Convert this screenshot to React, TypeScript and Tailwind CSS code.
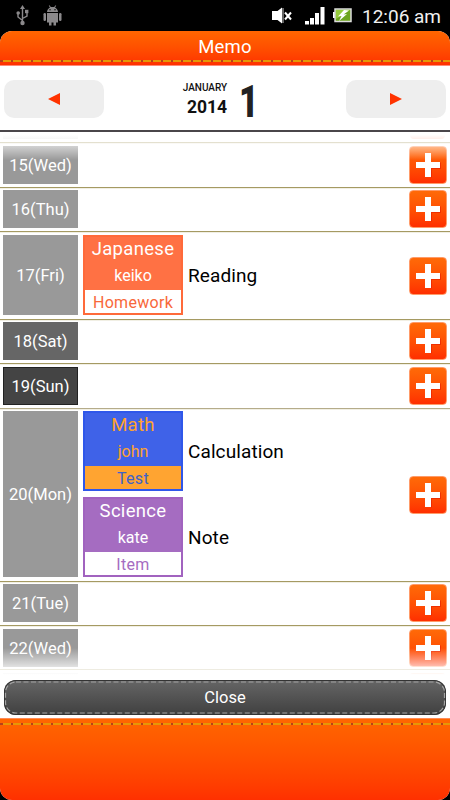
import clsx from 'clsx'

type Memo = {
  subject: string
  teacher: string
  kind: string
  note: string
  card: string
  label: string
}

type Day = {
  label: string
  row: string
  cell: string
  line: string
  memos?: Memo[]
}

const weekday = 'bg-[#999999]'

const days: Day[] = [
  { label: '15(Wed)', row: 'h-[45px] pt-[3px]', cell: weekday, line: 'border-[#a59a62]' },
  { label: '16(Thu)', row: 'h-[44px] pt-[2px]', cell: weekday, line: 'border-[#a59a62]' },
  {
    label: '17(Fri)',
    row: 'h-[88px] pt-[3px]',
    cell: weekday,
    line: 'border-[#a59a62]',
    memos: [
      {
        subject: 'Japanese',
        teacher: 'keiko',
        kind: 'Homework',
        note: 'Reading',
        card: 'bg-[#ff7144] border-[#ff6a3a] text-white',
        label: 'bg-white text-[#f8683a]'
      }
    ]
  },
  { label: '18(Sat)', row: 'h-[44px] pt-[2px]', cell: 'bg-[#666666]', line: 'border-[#a59a62]' },
  {
    label: '19(Sun)',
    row: 'h-[45px] pt-[3px]',
    cell: 'bg-[#444444] shadow-[inset_0_0_0_1px_#222]',
    line: 'border-[#a59a62]'
  },
  {
    label: '20(Mon)',
    row: 'h-[173px] pt-[2px]',
    cell: weekday,
    line: 'border-[#b5ac8a]',
    memos: [
      {
        subject: 'Math',
        teacher: 'john',
        kind: 'Test',
        note: 'Calculation',
        card: 'bg-[#3f62e8] border-[#2f57ea] text-[#ffa22e]',
        label: 'bg-[#ffa431] text-[#3f62c8]'
      },
      {
        subject: 'Science',
        teacher: 'kate',
        kind: 'Item',
        note: 'Note',
        card: 'bg-[#a56cc1] border-[#a163bf] text-white',
        label: 'bg-white text-[#a56cc1]'
      }
    ]
  },
  { label: '21(Tue)', row: 'h-[44px] pt-[2px]', cell: weekday, line: 'border-[#a59a62]' },
  { label: '22(Wed)', row: 'h-[44px] pt-[3px]', cell: weekday, line: 'border-[#a59a62]' }
]

const StatusBar = () => (
  <div className="flex h-[31px] items-center bg-black text-white">
    <svg className="ml-[16px]" width="13" height="21" viewBox="0 0 13 21" fill="none" stroke="#8b898b" strokeWidth="1.4">
      <path d="M6.5 3v14M6.5 15.5L2 12V8M6.5 13.5L11 11V6" />
      <path d="M6.5 0L9 4H4z" fill="#8b898b" stroke="none" />
      <circle cx="6.5" cy="18" r="2.2" fill="#8b898b" stroke="none" />
      <circle cx="2.2" cy="8" r="1.8" fill="#8b898b" stroke="none" />
      <path d="M9 4.8h3.4v3.4H9z" fill="#8b898b" stroke="none" />
    </svg>
    <svg className="ml-[14px]" width="19" height="21" viewBox="0 0 19 21" fill="#8b898b">
      <path d="M4 7C4 4.6 5.6 3 7 2.4L5.8.8l.7-.5L7.8 2h3.4L12.5.3l.7.5L12 2.4C13.4 3 15 4.6 15 7z" />
      <path d="M4 8h11v9.5H4z" />
      <path d="M6 17h2.5v3.5H6zM10.5 17H13v3.5h-2.5z" />
      <rect x="0.5" y="8" width="2.5" height="8" rx="1.2" />
      <rect x="16" y="8" width="2.5" height="8" rx="1.2" />
      <circle cx="7" cy="4.8" r=".7" fill="#000" />
      <circle cx="12" cy="4.8" r=".7" fill="#000" />
    </svg>

    <svg className="ml-[210px]" width="21" height="18" viewBox="0 0 21 18" fill="#fff">
      <path d="M0 4h5.5L10 0.5v16L5.5 13H0z" />
      <path d="M13 5.5l6 7M19 5.5l-6 7" stroke="#fff" strokeWidth="2" />
      <path d="M11 1v15" stroke="#fff" strokeWidth=".8" />
    </svg>
    <svg className="ml-[12px]" width="20" height="18" viewBox="0 0 20 18" fill="#fff">
      <path d="M0 14h4v3.5H0zM5 11h4v6.5H5zM10 6h4v11.5h-4zM15.5 0h4v17.5h-4z" />
    </svg>
    <svg className="ml-[8px]" width="19" height="15" viewBox="0 0 19 15">
      <path d="M0 4h3v6H0z" fill="#fff" />
      <rect x="2" y="1" width="16" height="12.5" fill="#6da51e" stroke="#ddd" strokeWidth="1.5" />
      <path d="M3 2h14L3 11z" fill="#96cc3c" />
      <path d="M11 2L5 8.5l3.5-.5L6 13l8-7-3.5.5L16 2.5z" fill="#fff" />
    </svg>
    <span className="ml-[10px] pt-[2px] text-[19px] leading-[29px] text-[#f0f0f0] whitespace-nowrap">12:06 am</span>
  </div>
)

const Stitch = () => (
  <svg className="block w-full" height="2" viewBox="0 0 450 2">
    <path d="M0 1h450" stroke="#b8401a" strokeWidth="2" />
    <path d="M3 1h450" stroke="#f5b400" strokeWidth="1.6" strokeDasharray="8 2" />
  </svg>
)

const PlusButton = () => (
  <button
    aria-label="Add memo"
    className="mr-[3px] h-[38px] w-[38px] shrink-0 rounded-[4px] border border-[#ff9b69] bg-linear-to-b from-[#ff6a08] to-[#ff2e00]"
  >
    <svg width="36" height="36" viewBox="0 0 36 36">
      <path d="M30.5 15.5v6h-9v9" fill="none" stroke="#e51c00" strokeWidth="1" opacity=".6" />
      <path d="M15 6h6v9h9v6h-9v9h-6v-9H6v-6h9z" fill="#fff" />
    </svg>
  </button>
)

const MemoCard = ({ subject, teacher, kind, note, card, label }: Memo) => (
  <div className="flex items-center">
    <div className={clsx('flex h-[80px] w-[100px] flex-col border-2 text-center', card)}>
      <div className="h-[26px] text-[18.5px] leading-[24px] tracking-[0.3px]">{subject}</div>
      <div className="h-[27px] text-[16px] leading-[25px]">{teacher}</div>
      <div className={clsx('h-[23px] text-[16px] leading-[25px] tracking-[0.3px]', label)}>{kind}</div>
    </div>
    <span className="ml-[5px] pt-[2px] text-[19px] leading-[24px] tracking-[0.1px] text-black">{note}</span>
  </div>
)

const DayRow = ({ label, row, cell, line, memos = [] }: Day) => (
  <div className={clsx('flex border-t pb-[3px] pl-[3px] shadow-[inset_0_1px_0_#f1efe4]', row, line)}>
    <div
      className={clsx(
        'flex w-[75px] shrink-0 items-center justify-center pt-[2px] text-[16.5px] text-white',
        memos.length === 0 && 'h-[38px]',
        memos.length === 1 && 'h-[80px]',
        memos.length === 2 && 'h-[166px]',
        cell
      )}
    >
      {label}
    </div>
    <div className="ml-[5px] flex flex-1 flex-col gap-[6px]">
      {memos.map(memo => (
        <MemoCard key={memo.subject} {...memo} />
      ))}
    </div>
    <div className="flex items-center">
      <PlusButton />
    </div>
  </div>
)

const App = () => {
  return (
    <div className="h-[800px] w-[450px] overflow-hidden bg-black font-['Roboto',sans-serif]">
      <StatusBar />

      <div className="bg-white [clip-path:inset(0_round_12px)]">
        <header className="flex h-[35px] flex-col border-b border-[#ff8a75] bg-linear-to-b from-[#ff6600] to-[#ff3000]">
          <h1 className="h-[29px] pt-[4px] text-center text-[18.5px] leading-[25px] tracking-[0.2px] text-white">Memo</h1>
          <Stitch />
        </header>

        {/* Month switcher */}
        <div className="flex h-[66px] items-center justify-between border-b-2 border-[#4a464a] px-[4px] pt-px">
          <button aria-label="Previous month" className="flex h-[38px] w-[100px] items-center justify-center rounded-[10px] bg-[#eeeeee]">
            <svg width="12" height="12" viewBox="0 0 12 12">
              <path d="M12 0v12L0 6z" fill="#ff3300" />
            </svg>
          </button>
          <div className="flex items-center pt-[3px] pr-[2px]">
            <div className="text-right font-bold text-[#111]">
              <div className="text-[10px] leading-[14px] font-medium">JANUARY</div>
              <div className="text-[17.5px] leading-[24px]">2014</div>
            </div>
            <span className="mt-[3px] ml-[12px] inline-block origin-left scale-x-75 text-[45px] leading-[40px] font-black text-[#222]">
              1
            </span>
          </div>
          <button aria-label="Next month" className="flex h-[38px] w-[100px] items-center justify-center rounded-[10px] bg-[#eeeeee]">
            <svg width="12" height="12" viewBox="0 0 12 12">
              <path d="M0 0v12l12-6z" fill="#ff3300" />
            </svg>
          </button>
        </div>

        {/* Day list, fading out at both ends */}
        <div className="relative h-[544px] overflow-hidden">
          <div className="flex h-[10px] items-start justify-between pr-[5px] pl-[3px] pt-[3px]">
            <div className="h-[4px] w-[75px] bg-[#999999]/50" />
            <div className="h-[4px] w-[35px] rounded-b-[4px] bg-[#ff3300]/50" />
          </div>
          {days.map(day => (
            <DayRow key={day.label} {...day} />
          ))}
          <div className="flex items-start justify-between border-t border-[#a59a62] pt-[3px] pr-[5px] pl-[3px]">
            <div className="h-[3px] w-[75px] bg-[#999999]" />
            <div className="h-[3px] w-[35px] rounded-t-[4px] bg-[#ff5500]" />
          </div>
          <div className="pointer-events-none absolute inset-x-0 top-0 h-[28px] bg-linear-to-b from-white from-10% to-transparent" />
          <div className="pointer-events-none absolute inset-x-0 bottom-0 h-[28px] bg-linear-to-t from-white from-5% to-transparent" />
        </div>

        <div className="h-[42px] px-[4px] pt-[4px]">
          <button className="block h-[35px] w-[442px] rounded-[12px] bg-linear-to-b from-[#666666] to-[#404040] text-[16.5px] text-white shadow-[inset_0_0_0_1px_#333]">
            <span className="relative flex h-full items-center justify-center pt-[2px]">
              Close
              <svg className="absolute inset-0" width="442" height="35" viewBox="0 0 442 35">
                <rect x="1.5" y="2" width="439" height="31" rx="10.5" fill="none" stroke="#a3a3a3" strokeWidth="1.2" strokeDasharray="5 2.5" />
              </svg>
            </span>
          </button>
        </div>

        <footer className="h-[82px] border-t border-[#ff8a55] bg-linear-to-b from-[#ff6600] to-[#ff3000] pt-[4px]">
          <Stitch />
        </footer>
      </div>
    </div>
  )
}

export default App
